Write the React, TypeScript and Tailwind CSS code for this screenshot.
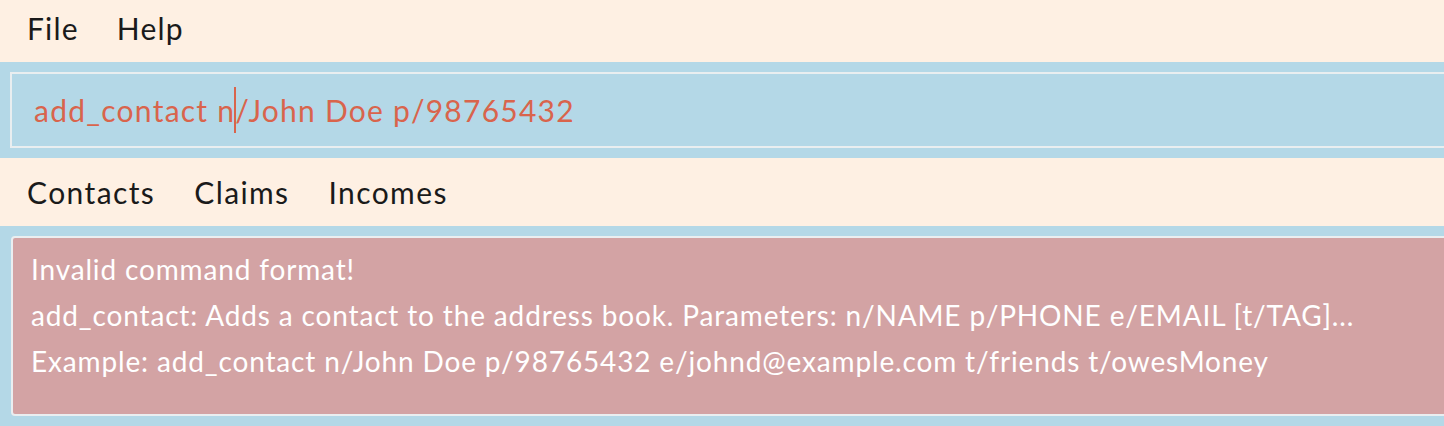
import React from "react";

export default function App() {
  const font = { fontFamily: "Lato, 'Open Sans', sans-serif" };
  return (
    <div className="w-[1444px] h-[426px] overflow-hidden bg-[#b4d8e7]" style={font}>
      <div className="h-[62px] bg-[#fef0e3] flex items-center pl-[27px] pb-[5px] gap-[38px] text-[30px] tracking-[1.2px] text-[#1a1a1a]">
        <span>File</span>
        <span>Help</span>
      </div>
      <div className="h-[96px] pt-[10px] pl-[10px]">
        <div className="h-[76px] w-[1460px] border-2 border-[#e9eef0] flex items-center pl-[22px] text-[30px] tracking-[1.25px] text-[#d9644c]">
          <span>add_contact n</span>
          <span className="inline-block w-[2px] h-[46px] bg-[#d9644c] -ml-[1px] mr-[-1px]" />
          <span>/John Doe p/98765432</span>
        </div>
      </div>
      <div className="h-[68px] bg-[#fef0e3] flex items-center pl-[27px] gap-[39px] text-[30px] tracking-[1.4px] text-[#1a1a1a]">
        <span>Contacts</span>
        <span>Claims</span>
        <span>Incomes</span>
      </div>
      <div className="pt-[10px] pl-[11px]">
        <div className="h-[180px] w-[1460px] border-2 border-[#eaeef0] rounded-[4px] bg-[#d3a3a4] pl-[18px] pt-[8px] text-[28px] tracking-[0.85px] leading-[46px] text-white">
          <div>Invalid command format!</div>
          <div>add_contact: Adds a contact to the address book. Parameters: n/NAME p/PHONE e/EMAIL [t/TAG]...</div>
          <div>Example: add_contact n/John Doe p/98765432 e/johnd@example.com t/friends t/owesMoney</div>
        </div>
      </div>
    </div>
  );
}
